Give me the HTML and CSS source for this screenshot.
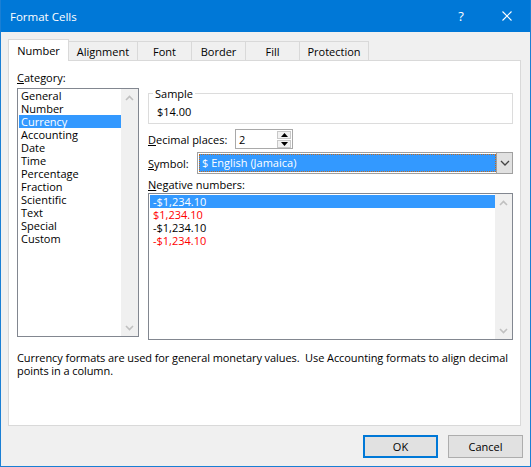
FILE: index.html
```html
<!DOCTYPE html>
<html lang="en">
<head>
<meta charset="UTF-8">
<title>Format Cells</title>
<link rel="stylesheet" href="styles.css">
</head>
<body>
<div class="window">
  <div class="titlebar">
    <span class="title">Format Cells</span>
    <span class="help">?</span>
    <span class="close">
      <svg width="10" height="10" viewBox="0 0 10 10"><path d="M0.5 0.5L9.5 9.5M9.5 0.5L0.5 9.5" stroke="#fff" stroke-width="1.1" fill="none"/></svg>
    </span>
  </div>

  <div class="content">
    <div class="tabs">
      <div class="tab active">Number</div>
      <div class="tab wide">Alignment</div>
      <div class="tab">Font</div>
      <div class="tab">Border</div>
      <div class="tab">Fill</div>
      <div class="tab wide">Protection</div>
    </div>

    <div class="panel">
      <div class="cols">
        <!-- Category list -->
        <div class="left">
          <div class="label"><u>C</u>ategory:</div>
          <div class="listbox cat-list">
            <ul class="items">
              <li>General</li>
              <li>Number</li>
              <li class="selected">Currency</li>
              <li>Accounting</li>
              <li>Date</li>
              <li>Time</li>
              <li>Percentage</li>
              <li>Fraction</li>
              <li>Scientific</li>
              <li>Text</li>
              <li>Special</li>
              <li>Custom</li>
            </ul>
            <div class="vscroll">
              <div class="arrow"><svg width="9" height="6" viewBox="0 0 9 6"><path d="M1 5L4.5 1.5L8 5" stroke="#c0c0c0" stroke-width="1.6" fill="none"/></svg></div>
              <div class="arrow"><svg width="9" height="6" viewBox="0 0 9 6"><path d="M1 1L4.5 4.5L8 1" stroke="#c0c0c0" stroke-width="1.6" fill="none"/></svg></div>
            </div>
          </div>
        </div>

        <!-- Format options -->
        <div class="right">
          <fieldset class="sample">
            <legend>Sample</legend>
            <div class="sample-value">$14.00</div>
          </fieldset>

          <div class="row decimals">
            <span class="row-label"><u>D</u>ecimal places:</span>
            <div class="spin">
              <span class="spin-value">2</span>
              <div class="spin-btns">
                <div class="spin-btn"><svg width="7" height="4" viewBox="0 0 7 4"><path d="M3.5 0L7 4H0Z" fill="#000"/></svg></div>
                <div class="spin-btn"><svg width="7" height="4" viewBox="0 0 7 4"><path d="M0 0H7L3.5 4Z" fill="#000"/></svg></div>
              </div>
            </div>
          </div>

          <div class="row symbol">
            <span class="row-label"><u>S</u>ymbol:</span>
            <div class="combo">
              <div class="combo-field">$ English (Jamaica)</div>
              <div class="combo-btn"><svg width="10" height="6" viewBox="0 0 10 6"><path d="M1 1L5 5L9 1" stroke="#444" stroke-width="1.3" fill="none"/></svg></div>
            </div>
          </div>

          <div class="label neg-label"><u>N</u>egative numbers:</div>
          <div class="listbox neg-list">
            <ul class="items">
              <li class="selected">-$1,234.10</li>
              <li class="red">$1,234.10</li>
              <li>-$1,234.10</li>
              <li class="red">-$1,234.10</li>
            </ul>
            <div class="vscroll">
              <div class="arrow"><svg width="9" height="6" viewBox="0 0 9 6"><path d="M1 5L4.5 1.5L8 5" stroke="#c0c0c0" stroke-width="1.6" fill="none"/></svg></div>
              <div class="arrow"><svg width="9" height="6" viewBox="0 0 9 6"><path d="M1 1L4.5 4.5L8 1" stroke="#c0c0c0" stroke-width="1.6" fill="none"/></svg></div>
            </div>
          </div>
        </div>
      </div>

      <p class="desc">Currency formats are used for general monetary values.&nbsp; Use Accounting formats to align decimal<br>points in a column.</p>
    </div>

    <div class="buttons">
      <button class="btn default">OK</button>
      <button class="btn">Cancel</button>
    </div>
  </div>
</div>
</body>
</html>
```

FILE: styles.css
```css
body {
  margin: 0;
  font-family: "Open Sans", "Noto Sans", sans-serif;
  font-size: 11px;
  color: #000;
}

.window {
  width: 531px;
  height: 467px;
  box-sizing: border-box;
  border: 1px solid #1a7fd4;
  border-top: none;
  background: #f0f0f0;
}

/* Title bar */
.titlebar {
  height: 32px;
  background: #0078d7;
  color: #fff;
  display: flex;
  align-items: center;
  font-size: 11.5px;
}
.title {
  margin-left: 9px;
  flex: 1;
}
.help {
  width: 14px;
  text-align: center;
  font-size: 13px;
  margin-right: 34px;
}
.close {
  display: flex;
  margin-right: 18px;
}

.content {
  padding: 7px 7px 0 7px;
}

/* Tabs */
.tabs {
  display: flex;
  align-items: flex-end;
  height: 21px;
}
.tab {
  box-sizing: border-box;
  width: 55px;
  height: 19px;
  margin-left: -1px;
  border: 1px solid #d9d9d9;
  border-bottom: none;
  background: #f0f0f0;
  display: flex;
  align-items: center;
  justify-content: center;
  padding-top: 1px;
}
.tab.wide {
  width: 70px;
}
.tab.active {
  width: 61px;
  height: 22px;
  margin-left: 0;
  margin-bottom: -1px;
  padding-top: 0;
  background: #fff;
  position: relative;
  z-index: 1;
}

.panel {
  box-sizing: border-box;
  width: 513px;
  height: 366px;
  border: 1px solid #d9d9d9;
  background: #fff;
  padding: 9px 8px 0 8px;
}

.cols {
  display: grid;
  grid-template-columns: 122px 365px;
  column-gap: 9px;
}

.label {
  height: 15px;
  line-height: 15px;
}

/* List boxes */
.listbox {
  box-sizing: border-box;
  border: 1px solid #828790;
  display: flex;
  background: #fff;
}
.cat-list {
  margin-top: 3px;
  height: 249px;
}
.neg-list {
  margin-top: 1px;
  height: 147px;
}
.items {
  list-style: none;
  margin: 0;
  padding: 0 0 0 1px;
  flex: 1;
}
.neg-list .items {
  padding-top: 1px;
}
.items li {
  height: 13px;
  line-height: 13px;
  padding-left: 2px;
  white-space: nowrap;
}
.neg-list .items li {
  padding-left: 3px;
}
.items li.selected {
  background: #3399ff;
  color: #fff;
}
.items li.red {
  color: #ff0000;
}
.vscroll {
  width: 17px;
  background: #f0f0f0;
  display: flex;
  flex-direction: column;
  justify-content: space-between;
}
.arrow {
  height: 17px;
  display: flex;
  align-items: center;
  justify-content: center;
}

/* Sample group */
.sample {
  box-sizing: border-box;
  margin: 16px 0 0 0;
  height: 38px;
  border: 1px solid #dcdcdc;
  padding: 0 4px;
}
.sample legend {
  padding: 0 2px;
  line-height: 15px;
}
.sample-value {
  padding: 3px 0 0 4px;
  line-height: 15px;
}

.row {
  display: flex;
  align-items: center;
}
.decimals {
  margin-top: 5px;
  height: 20px;
}
.decimals .row-label {
  width: 87px;
}
.symbol {
  margin-top: 3px;
  height: 22px;
}
.symbol .row-label {
  width: 49px;
}

/* Spin box */
.spin {
  box-sizing: border-box;
  width: 58px;
  height: 20px;
  border: 1px solid #a9a9a9;
  background: #fff;
  display: flex;
  align-items: center;
  padding: 0 1px 0 3px;
}
.spin-value {
  flex: 1;
}
.spin-btns {
  display: flex;
  flex-direction: column;
  gap: 1px;
}
.spin-btn {
  box-sizing: border-box;
  width: 14px;
  height: 8px;
  border: 1px solid #c8c8c8;
  background: #f2f2f2;
  display: flex;
  align-items: center;
  justify-content: center;
}

/* Combo box */
.combo {
  box-sizing: border-box;
  width: 316px;
  height: 22px;
  border: 1px solid #a0a0a0;
  background: #fff;
  display: flex;
  padding: 1px 0 1px 1px;
}
.combo-field {
  flex: 1;
  box-sizing: border-box;
  height: 18px;
  background: #3399ff;
  color: #fff;
  border: 1px dotted #c46a1c;
  padding-left: 2px;
  line-height: 15px;
}
.combo-btn {
  box-sizing: border-box;
  width: 17px;
  height: 22px;
  margin: -2px -1px -1px 0;
  border: 1px solid #a0a0a0;
  background: #e1e1e1;
  display: flex;
  align-items: center;
  justify-content: center;
}

.neg-label {
  margin-top: 3px;
}

.desc {
  margin: 11px 0 0 0;
  line-height: 13px;
  letter-spacing: -0.08px;
  white-space: nowrap;
}

/* Dialog buttons */
.buttons {
  display: flex;
  justify-content: flex-end;
  gap: 10px;
  margin-top: 9px;
}
.btn {
  box-sizing: border-box;
  width: 75px;
  height: 23px;
  font-family: inherit;
  font-size: 11px;
  color: #000;
  background: #e1e1e1;
  border: 1px solid #adadad;
  padding: 0;
}
.btn.default {
  border: 2px solid #0078d7;
}
```
